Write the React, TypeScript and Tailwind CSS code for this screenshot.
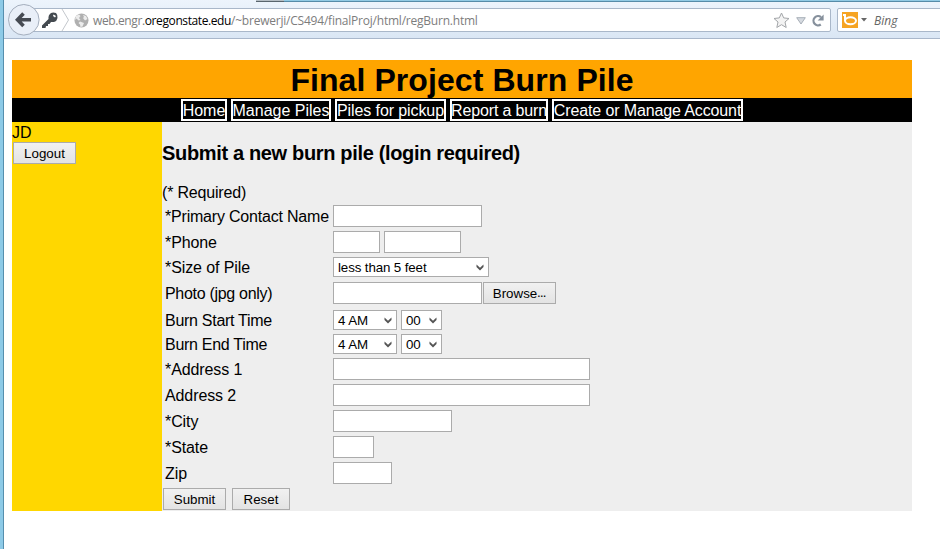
import type { ReactNode } from 'react';

const navItems = [
  { label: 'Home', width: 'w-[46px]', text: '' },
  { label: 'Manage Piles', width: 'w-[100px]', text: '' },
  { label: 'Piles for pickup', width: 'w-[111px]', text: 'tracking-[-0.1px]' },
  { label: 'Report a burn', width: 'w-[98px]', text: 'tracking-[-0.15px]' },
  { label: 'Create or Manage Account', width: 'w-[191px]', text: 'tracking-[-0.12px]' },
];

function Field({ width }: { width: string }) {
  return (
    <input
      type="text"
      className={`block h-[22px] shrink-0 border border-[#ababab] bg-white px-1 text-[13px] outline-none ${width}`}
    />
  );
}

function Button({ width, children }: { width: string; children: ReactNode }) {
  return (
    <button
      className={`flex h-[22px] shrink-0 items-center justify-center border border-[#ababab] bg-linear-to-b from-[#f1f1f1] to-[#e3e3e3] pt-0.5 text-[13.33px] leading-none ${width}`}
    >
      {children}
    </button>
  );
}

function Select({ width, children }: { width: string; children: ReactNode }) {
  return (
    <div
      className={`flex h-5 shrink-0 items-center justify-between border border-[#ababab] bg-white pr-1 pl-1 text-[13.33px] leading-none tracking-[-0.12px] ${width}`}
    >
      <span className="pt-0.5 whitespace-nowrap">{children}</span>
      <svg width="8" height="7" viewBox="0 0 8 7" className="mt-px shrink-0">
        <path d="M0.5 0.5L4 3.8L7.5 0.5V3L4 6.4L0.5 3Z" fill="#555" />
      </svg>
    </div>
  );
}

interface RowProps {
  label: string;
  size?: string;
  text?: string;
  children: ReactNode;
}

function Row({ label, size = 'h-[26px]', text = 'tracking-[-0.1px]', children }: RowProps) {
  return (
    <div className={`flex items-center ${size}`}>
      <span className={`w-[168px] shrink-0 pt-0.5 leading-[18px] whitespace-nowrap ${text}`}>{label}</span>
      {children}
    </div>
  );
}

function Toolbar() {
  return (
    <div className="flex h-[39px] flex-col border-b border-[#a9b7cb] bg-linear-to-b from-[#edf4fc] to-[#dae6f4]">
      <div className="flex h-0.5 shrink-0">
        <div className="w-[252px]" />
        <div className="w-[28px] border-b border-[#59656d] bg-[#b5bec5]" />
        <div className="grow border-b border-[#568ba8] bg-[#91cae4]" />
      </div>
      <div className="relative flex pt-1.5">
        <div className="ml-[17px] flex h-6 w-[810px] shrink-0 items-center rounded-xs border border-[#a9b7c9] bg-white pl-[19px]">
          <svg width="18" height="17" viewBox="0 0 18 17" className="shrink-0">
            <path
              fillRule="evenodd"
              d="M10 1Q12 0 15 1Q17 3 16.5 6Q16 9 13 10L10 10L8.5 12L7 12L7 14L5 14L4.500 16L1 16L1 13.500L7.500 7Q7 3 10 1ZM12.500 2.500L12 4L14 5.500L15 4Z"
              fill="#444a50"
            />
          </svg>
          <svg width="9" height="22" viewBox="0 0 9 22" className="ml-0.5 shrink-0">
            <path d="M1 0L7.500 11L1 22" fill="none" stroke="#c3c7cc" />
          </svg>
          <svg width="15" height="15" viewBox="0 0 15 15" className="ml-1 shrink-0">
            <circle cx="7.500" cy="7.500" r="7" fill="#b0b0b0" />
            <path d="M2 3L5 1.500L6.500 3L5 5L6.500 7L4.500 7.500L2.500 5.500L1 7ZM9 2L12 3L13.500 6L11 7.500L9 5L10 4ZM6 8.500L10 10L8.500 13.500L6.500 14L6 11.500L4.500 10Z" fill="#ececec" />
          </svg>
          <span className="ml-[4px] w-[400px] pt-0.5 font-['Open_Sans','Noto_Sans',sans-serif] text-[12px] leading-none tracking-[-0.22px] whitespace-nowrap text-[#7d7d7d]">
            <span className="tracking-[-0.38px]">web.engr.</span>
            <span className="tracking-[-0.4px] text-black">oregonstate.edu</span>/~brewerji/CS494/finalProj/html/regBurn.html
          </span>
          <svg width="17" height="17" viewBox="0 0 17 17" className="ml-auto shrink-0">
            <path d="M8.500 1L10.700 5.900L16 6.500L12 10L13.200 15.500L8.500 12.700L3.800 15.500L5 10L1 6.500L6.300 5.900Z" fill="#f3f3f3" stroke="#a3a6a9" />
          </svg>
          <svg width="10" height="8" viewBox="0 0 10 8" className="mt-0.5 ml-1.5 shrink-0">
            <path d="M0.700 0.700H9.300L5 7Z" fill="#d6dae0" stroke="#a7aeb7" />
          </svg>
          <svg width="13" height="13" viewBox="0 0 13 13" className="mr-[5px] ml-1.5 shrink-0">
            <path d="M8.800 10.500A4.600 4.600 0 1 1 9 3.200" fill="none" stroke="#86909c" strokeWidth="2.200" />
            <path d="M11.600 0.500V6.500H5.600Z" fill="#86909c" />
          </svg>
        </div>
        <div className="ml-1.5 flex h-6 w-[120px] shrink-0 items-center rounded-xs border border-[#a9b7c9] bg-white pl-1">
          <svg width="16" height="16" viewBox="0 0 16 16" className="shrink-0">
            <rect width="16" height="16" fill="#f6a423" />
            <path d="M1 3H3V9" fill="none" stroke="white" strokeWidth="2" />
            <ellipse cx="8.500" cy="8.800" rx="5.500" ry="3.500" fill="none" stroke="white" strokeWidth="2" />
          </svg>
          <svg width="6" height="4" viewBox="0 0 6 4" className="ml-[3px] shrink-0">
            <path d="M0 0H6L3 3.500Z" fill="#666" />
          </svg>
          <span className="ml-[7px] pt-0.5 font-['Open_Sans','Noto_Sans',sans-serif] text-[12px] leading-none text-[#666] italic">Bing</span>
        </div>
        <svg width="33" height="33" viewBox="0 0 33 33" className="absolute top-[1px] left-[3px]">
          <circle cx="16.800" cy="16.800" r="15.300" fill="#e9eff8" stroke="#a4aebd" />
          <path d="M16.500 10.500L10.500 16.800L16.500 23M11 16.800H24" fill="none" stroke="#464b53" strokeWidth="3.600" />
        </svg>
      </div>
    </div>
  );
}

export default function App() {
  return (
    <div className="flex h-[549px] w-[940px] overflow-hidden bg-white font-['Liberation_Sans',Arial,sans-serif] text-base text-black">
      <div className="w-1 shrink-0 border-r border-[#568fae] bg-[#8dcae7]" />
      <div className="flex w-[936px] shrink-0 flex-col">
        <Toolbar />
        <main className="mt-[21px] ml-2 flex w-[900px] flex-col">
          <h1 className="h-[38px] bg-[#ffa500] text-center text-[32px] leading-[41px] font-bold tracking-[0.08px]">Final Project Burn Pile</h1>
          <nav className="flex h-6 justify-center gap-1 bg-black pt-px text-white">
            {navItems.map((item) => (
              <a
                key={item.label}
                className={`flex h-[22px] items-center justify-center border-2 border-white pt-0.5 leading-[18px] whitespace-nowrap ${item.width} ${item.text}`}
              >
                {item.label}
              </a>
            ))}
          </nav>
          <div className="flex h-[389px]">
            <aside className="w-[150px] shrink-0 bg-[#ffd700]">
              <div className="h-5 leading-[21px]">JD</div>
              <div className="pl-px">
                <Button width="w-[63px]">Logout</Button>
              </div>
            </aside>
            <section className="grow bg-[#eeeeee]">
              <h2 className="pt-5 text-[20px] leading-[22px] font-bold tracking-[-0.34px]">Submit a new burn pile (login required)</h2>
              <p className="mt-5 h-[19px] leading-[18px] tracking-[-0.18px]">(* Required)</p>
              <form className="pl-[3px]" onSubmit={(event) => event.preventDefault()}>
                <Row label="*Primary Contact Name" text="tracking-[-0.2px]">
                  <Field width="w-[149px]" />
                </Row>
                <Row label="*Phone">
                  <div className="flex gap-1">
                    <Field width="w-[47px]" />
                    <Field width="w-[77px]" />
                  </div>
                </Row>
                <Row label="*Size of Pile" size="h-6">
                  <Select width="w-[156px]">less than 5 feet</Select>
                </Row>
                <Row label="Photo (jpg only)" size="h-[29px] pb-px" text="tracking-[-0.3px]">
                  <Field width="w-[149px]" />
                  <div className="pl-px">
                    <Button width="w-[73px]">
                      Browse<span className="text-[9px] font-bold">…</span>
                    </Button>
                  </div>
                </Row>
                {['Burn Start Time', 'Burn End Time'].map((label) => (
                  <Row key={label} label={label} size="h-6" text="tracking-[-0.28px]">
                    <div className="flex gap-1">
                      <Select width="w-[64px]">4 AM</Select>
                      <Select width="w-[41px]">00</Select>
                    </div>
                  </Row>
                ))}
                <Row label="*Address 1">
                  <Field width="w-[257px]" />
                </Row>
                <Row label="Address 2">
                  <Field width="w-[257px]" />
                </Row>
                <Row label="*City">
                  <Field width="w-[119px]" />
                </Row>
                <Row label="*State">
                  <Field width="w-[41px]" />
                </Row>
                <Row label="Zip">
                  <Field width="w-[59px]" />
                </Row>
                <div className="-ml-0.5 flex gap-1.5 pt-0.5">
                  <Button width="w-[63px]">Submit</Button>
                  <Button width="w-[58px]">Reset</Button>
                </div>
              </form>
            </section>
          </div>
        </main>
      </div>
    </div>
  );
}
